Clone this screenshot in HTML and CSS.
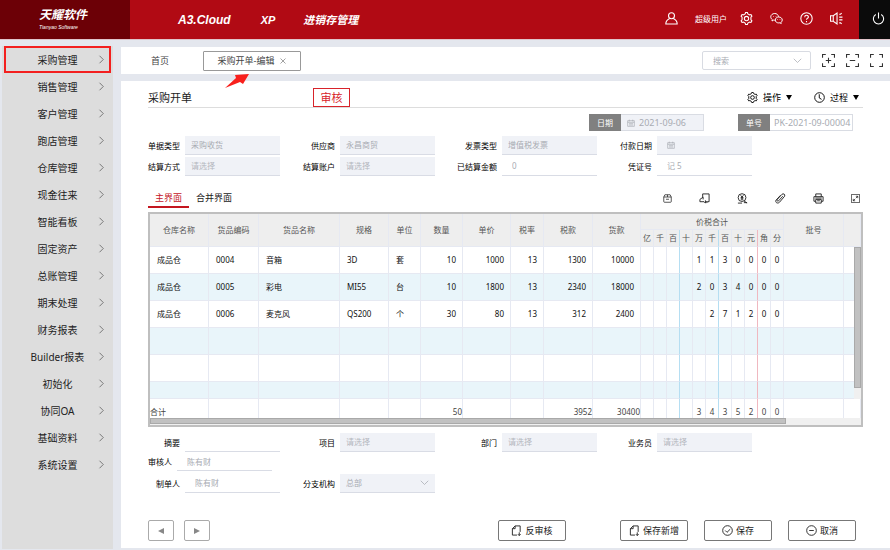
FILE: index.html
```html
<!DOCTYPE html>
<html lang="zh-CN">
<head>
    <meta charset="UTF-8">
    <meta name="viewport" content="width=device-width, initial-scale=1.0">
    <title>采购开单</title>
    <link rel="stylesheet" href="styles.css">
</head>
<body>
    <svg class="sprite" aria-hidden="true">
        <symbol id="i-gear" viewBox="0 0 24 24"><path d="M9.5 3.5 10.3 1h3.4l.8 2.5 3.2 1.8 2.6-.6 1.7 2.9-1.8 2v4.8l1.8 2-1.7 2.9-2.6-.6-3.2 1.8-.8 2.5h-3.4l-.8-2.5-3.2-1.8-2.6.6L2 16.4l1.8-2V9.6L2 7.6l1.700-2.900 2.600.6z"/><circle cx="12" cy="12" r="4"/></symbol>
        <symbol id="i-user" viewBox="0 0 24 24"><circle cx="12" cy="7" r="5.500"/><path d="M8.500 12C4.500 14 1.500 17 1.500 22h21c0-5-3-8-7-10"/></symbol>
        <symbol id="i-chat" viewBox="0 0 26 24"><path d="M17 8.500C16.500 4.500 13.500 2 9.500 2 5 2 1.500 5 1.500 8.700c0 2.200 1.200 4 3 5.300L4 17l3.200-1.800c.8.2 1.500.3 2.300.3"/><path d="M17.500 9c4 0 7 2.600 7 6 0 1.900-1 3.500-2.500 4.600l.5 2.400-2.700-1.400c-.7.2-1.500.3-2.300.3-4 0-7-2.600-7-5.900s3-6 7-6z"/><path d="M7 7v1M12 7v1M15 13.500v1M20 13.500v1"/></symbol>
        <symbol id="i-help" viewBox="0 0 24 24"><circle cx="12" cy="12" r="10.500"/><path d="M8.700 9.500c0-4.500 6.800-4.300 6.800-.4 0 2.600-3.500 2.500-3.500 5.400M12 16.800v2"/></symbol>
        <symbol id="i-sound" viewBox="0 0 24 24"><path d="M1 7h5l7-5v20l-7-5H1zM6 7v10M17 4h2.500l2-2M17 9.500h6M17 14.500h6M17 20h2.500l2 2"/></symbol>
        <symbol id="i-power" viewBox="0 0 24 24"><path d="M7 4.500a9.500 9.500 0 1 0 10 0M12 1v11"/></symbol>
        <symbol id="i-corners" viewBox="0 0 24 24"><path d="M1 7V1h6M17 1h6v6M23 17v6h-6M7 23H1v-6"/></symbol>
        <symbol id="i-zoomin" viewBox="0 0 24 24"><path d="M1 7V1h6M17 1h6v6M23 17v6h-6M7 23H1v-6M7 12h10M12 7v10"/></symbol>
        <symbol id="i-zoomout" viewBox="0 0 24 24"><path d="M1 7V1h6M17 1h6v6M23 17v6h-6M7 23H1v-6M7 12h10"/></symbol>
        <symbol id="i-clock" viewBox="0 0 24 24"><circle cx="12" cy="12" r="10.500"/><path d="M11.500 5v8l5 3"/></symbol>
        <symbol id="i-right" viewBox="0 0 8 12"><path d="m2 1 5 5-5 5"/></symbol>
        <symbol id="i-down" viewBox="0 0 12 8"><path d="m1 1 5 5 5-5"/></symbol>
        <symbol id="i-close" viewBox="0 0 12 12"><path d="m1 1 10 10M11 1 1 11"/></symbol>
        <symbol id="i-date" viewBox="0 0 24 24"><path d="M2 5h20v17H2zM2 10h20M7 2v5M17 2v5M6 14h12M6 18h12"/></symbol>
        <symbol id="i-box" viewBox="0 0 24 24"><path d="M2 8h20v12a2 2 0 0 1-2 2H4a2 2 0 0 1-2-2zM2 8l3-6h14l3 6M8 14h8M12 2v6"/></symbol>
        <symbol id="i-copy" viewBox="0 0 24 24"><path d="M8 2h14v17h-3M8 2v7M9 9l-7 5v5h9M9 9v5M11 19l3 3v-6M14 19h5l-3 3"/></symbol>
        <symbol id="i-money" viewBox="0 0 24 24"><circle cx="11" cy="10" r="8.500"/><path d="m8 5 3 4 3-4M11 9v7M8 10h6M8 13h6M2 22h9M15 17l7 5M15 21h7"/></symbol>
        <symbol id="i-clip" viewBox="0 0 24 24"><path d="M17 7 8 17c-2 2-5 0-3-3L15 3c3-3 8 0 6 4L10 20c-4 4-10 1-8-4L12 5"/></symbol>
        <symbol id="i-print" viewBox="0 0 24 24"><path d="M6 8V2h12v6M6 18H2V8h20v10h-4M6 14h12v8H6zM5 11h14M9 17h6"/></symbol>
        <symbol id="i-expand" viewBox="0 0 24 24"><path d="M1 1h22v22H1zM13 6h5v5M18 6l-5 5M11 18H6v-5M6 18l5-5"/></symbol>
        <symbol id="i-doc" viewBox="0 0 24 24"><path d="M13 22H3V8l6-6h11v13M9 2v6H3M18 16v7M15 20l3 3 3-3"/></symbol>
        <symbol id="i-check" viewBox="0 0 24 24"><circle cx="12" cy="12" r="10.500"/><path d="m7 12 4 4 7-7"/></symbol>
        <symbol id="i-minus" viewBox="0 0 24 24"><circle cx="12" cy="12" r="10.500"/><path d="M7 12h10"/></symbol>
    </svg>

    <header class="header">
        <div class="logo">
            <strong>天耀软件</strong>
            <span>Tianyao Software</span>
        </div>
        <nav class="brand">
            <span class="brand-name">A3.Cloud</span>
            <span class="brand-xp">XP</span>
            <span class="brand-module">进销存管理</span>
        </nav>
        <div class="header-tools">
            <svg class="icon-l"><use href="#i-user"/></svg>
            <span class="user-name">超级用户</span>
            <button aria-label="设置"><svg class="icon-l"><use href="#i-gear"/></svg></button>
            <button aria-label="微信"><svg class="icon-l"><use href="#i-chat"/></svg></button>
            <button aria-label="帮助"><svg class="icon-l"><use href="#i-help"/></svg></button>
            <button aria-label="公告"><svg class="icon-l"><use href="#i-sound"/></svg></button>
        </div>
        <button class="power" aria-label="退出"><svg class="icon-l"><use href="#i-power"/></svg></button>
    </header>

    <div class="layout">
        <nav class="sidebar">
            <a href="#" class="active"><span>采购管理</span><svg><use href="#i-right"/></svg></a>
            <a href="#"><span>销售管理</span><svg><use href="#i-right"/></svg></a>
            <a href="#"><span>客户管理</span><svg><use href="#i-right"/></svg></a>
            <a href="#"><span>跑店管理</span><svg><use href="#i-right"/></svg></a>
            <a href="#"><span>仓库管理</span><svg><use href="#i-right"/></svg></a>
            <a href="#"><span>现金往来</span><svg><use href="#i-right"/></svg></a>
            <a href="#"><span>智能看板</span><svg><use href="#i-right"/></svg></a>
            <a href="#"><span>固定资产</span><svg><use href="#i-right"/></svg></a>
            <a href="#"><span>总账管理</span><svg><use href="#i-right"/></svg></a>
            <a href="#"><span>期末处理</span><svg><use href="#i-right"/></svg></a>
            <a href="#"><span>财务报表</span><svg><use href="#i-right"/></svg></a>
            <a href="#"><span>Builder报表</span><svg><use href="#i-right"/></svg></a>
            <a href="#"><span>初始化</span><svg><use href="#i-right"/></svg></a>
            <a href="#"><span>协同OA</span><svg><use href="#i-right"/></svg></a>
            <a href="#"><span>基础资料</span><svg><use href="#i-right"/></svg></a>
            <a href="#"><span>系统设置</span><svg><use href="#i-right"/></svg></a>
        </nav>

        <main class="main">
            <div class="tabbar">
                <a href="#" class="home">首页</a>
                <a href="#" class="page-tab">采购开单-编辑 <svg class="icon-s"><use href="#i-close"/></svg>
                    <svg class="arrow" viewBox="0 0 24 14"><path d="M0 14 11 4 10 1 24 0 18 10 15 8z"/></svg>
                </a>
                <div class="tabbar-right">
                    <div class="search">
                        <select aria-label="搜索"><option>搜索</option></select>
                        <svg class="chevron"><use href="#i-down"/></svg>
                    </div>
                    <button aria-label="放大"><svg class="icon-l"><use href="#i-zoomin"/></svg></button>
                    <button aria-label="缩小"><svg class="icon-l"><use href="#i-zoomout"/></svg></button>
                    <button aria-label="全屏"><svg class="icon-l"><use href="#i-corners"/></svg></button>
                </div>
            </div>

            <section class="panel">
                <div class="title-row">
                    <h1>采购开单</h1>
                    <button class="audit">审核</button>
                    <div class="title-tools">
                        <button><svg class="icon-m"><use href="#i-gear"/></svg>操作<i class="caret"></i></button>
                        <button><svg class="icon-m"><use href="#i-clock"/></svg>过程<i class="caret"></i></button>
                    </div>
                </div>

                <div class="doc-row">
                    <div class="doc-item doc-date">
                        <label for="date">日期</label>
                        <div class="doc-input"><svg class="icon-s"><use href="#i-date"/></svg><input id="date" value="2021-09-06"></div>
                    </div>
                    <div class="doc-item">
                        <label for="no">单号</label>
                        <div class="doc-input"><input id="no" value="PK-2021-09-00004"></div>
                    </div>
                </div>

                <form class="form">
                    <div class="field"><label for="f1">单据类型</label><div class="box"><input id="f1" value="采购收货"></div></div>
                    <div class="field"><label for="f2">供应商</label><div class="box"><input id="f2" value="永昌商贸"></div></div>
                    <div class="field"><label for="f3">发票类型</label><div class="box"><input id="f3" value="增值税发票"></div></div>
                    <div class="field"><label for="f4">付款日期</label><div class="box indent"><svg class="icon-s"><use href="#i-date"/></svg><input id="f4"></div></div>
                    <div class="field first"><label for="f5">结算方式</label><div class="box"><input id="f5" placeholder="请选择"></div></div>
                    <div class="field"><label for="f6">结算账户</label><div class="box"><input id="f6" placeholder="请选择"></div></div>
                    <div class="field"><label for="f7">已结算金额</label><div class="box line indent"><input id="f7" value="0"></div></div>
                    <div class="field"><label for="f8">凭证号</label><div class="box line indent"><input id="f8" value="记 5"></div></div>
                </form>

                <div class="view-row">
                    <a href="#" class="current">主界面</a>
                    <a href="#">合并界面</a>
                    <div class="view-tools">
                        <button aria-label="归档"><svg class="icon-s"><use href="#i-box"/></svg></button>
                        <button aria-label="引用"><svg class="icon-m"><use href="#i-copy"/></svg></button>
                        <button aria-label="付款"><svg class="icon-m"><use href="#i-money"/></svg></button>
                        <button aria-label="附件"><svg class="icon-m"><use href="#i-clip"/></svg></button>
                        <button aria-label="打印"><svg class="icon-m"><use href="#i-print"/></svg></button>
                        <button aria-label="展开"><svg class="icon-s"><use href="#i-expand"/></svg></button>
                    </div>
                </div>

                <div class="grid">
                    <table>
                        <colgroup>
                            <col class="w59"><col class="w50"><col class="w81"><col class="w49"><col class="w32">
                            <col class="w42"><col class="w48"><col class="w33"><col class="w49"><col class="w48">
                            <col class="w13" span="11"><col class="w60"><col>
                        </colgroup>
                        <thead>
                            <tr class="head-top">
                                <th rowspan="2">仓库名称</th><th rowspan="2">货品编码</th><th rowspan="2">货品名称</th><th rowspan="2">规格</th><th rowspan="2">单位</th>
                                <th rowspan="2">数量</th><th rowspan="2">单价</th><th rowspan="2">税率</th><th rowspan="2">税款</th><th rowspan="2">货款</th>
                                <th colspan="11">价税合计</th><th rowspan="2">批号</th><th rowspan="2"></th>
                            </tr>
                            <tr class="head-digits">
                                <th>亿</th><th>千</th><th>百</th><th>十</th><th>万</th><th>千</th><th>百</th><th>十</th><th>元</th><th>角</th><th>分</th>
                            </tr>
                        </thead>
                        <tbody>
                            <tr>
                                <td>成品仓</td><td>0004</td><td>音箱</td><td>3D</td><td>套</td><td>10</td><td>1000</td><td>13</td><td>1300</td><td>10000</td>
                                <td></td><td></td><td></td><td></td><td>1</td><td>1</td><td>3</td><td>0</td><td>0</td><td>0</td><td>0</td><td></td><td></td>
                            </tr>
                            <tr>
                                <td>成品仓</td><td>0005</td><td>彩电</td><td>MI55</td><td>台</td><td>10</td><td>1800</td><td>13</td><td>2340</td><td>18000</td>
                                <td></td><td></td><td></td><td></td><td>2</td><td>0</td><td>3</td><td>4</td><td>0</td><td>0</td><td>0</td><td></td><td></td>
                            </tr>
                            <tr>
                                <td>成品仓</td><td>0006</td><td>麦克风</td><td>QS200</td><td>个</td><td>30</td><td>80</td><td>13</td><td>312</td><td>2400</td>
                                <td></td><td></td><td></td><td></td><td></td><td>2</td><td>7</td><td>1</td><td>2</td><td>0</td><td>0</td><td></td><td></td>
                            </tr>
                            <tr>
                                <td></td><td></td><td></td><td></td><td></td><td></td><td></td><td></td><td></td><td></td>
                                <td></td><td></td><td></td><td></td><td></td><td></td><td></td><td></td><td></td><td></td><td></td><td></td><td></td>
                            </tr>
                            <tr>
                                <td></td><td></td><td></td><td></td><td></td><td></td><td></td><td></td><td></td><td></td>
                                <td></td><td></td><td></td><td></td><td></td><td></td><td></td><td></td><td></td><td></td><td></td><td></td><td></td>
                            </tr>
                            <tr class="cut">
                                <td></td><td></td><td></td><td></td><td></td><td></td><td></td><td></td><td></td><td></td>
                                <td></td><td></td><td></td><td></td><td></td><td></td><td></td><td></td><td></td><td></td><td></td><td></td><td></td>
                            </tr>
                        </tbody>
                        <tfoot>
                            <tr>
                                <td>合计</td><td></td><td></td><td></td><td></td><td>50</td><td></td><td></td><td>3952</td><td>30400</td>
                                <td></td><td></td><td></td><td></td><td>3</td><td>4</td><td>3</td><td>5</td><td>2</td><td>0</td><td>0</td><td></td><td></td>
                            </tr>
                        </tfoot>
                    </table>
                    <div class="scroll-y"><div class="thumb"></div></div>
                    <div class="scroll-x"><div class="thumb"></div></div>
                </div>

                <form class="form form-bottom">
                    <div class="field"><label for="g1">摘要</label><div class="box line"><input id="g1"></div></div>
                    <div class="field"><label for="g2">项目</label><div class="box"><input id="g2" placeholder="请选择"></div></div>
                    <div class="field"><label for="g3">部门</label><div class="box"><input id="g3" placeholder="请选择"></div></div>
                    <div class="field"><label for="g4">业务员</label><div class="box"><input id="g4" placeholder="请选择"></div></div>
                    <div class="field auditor"><label for="g5">审核人</label><div class="box line indent"><input id="g5" value="陈有财"></div></div>
                    <div class="field first"><label for="g6">制单人</label><div class="box line indent"><input id="g6" value="陈有财"></div></div>
                    <div class="field"><label for="g7">分支机构</label><div class="box"><select id="g7"><option>总部</option></select><svg class="chevron"><use href="#i-down"/></svg></div></div>
                </form>

                <div class="actions">
                    <button class="step" aria-label="上一张"><i class="tri-left"></i></button>
                    <button class="step" aria-label="下一张"><i class="tri-right"></i></button>
                    <button class="btn unaudit"><svg class="icon-m"><use href="#i-doc"/></svg>反审核</button>
                    <button class="btn save-new"><svg class="icon-m"><use href="#i-doc"/></svg>保存新增</button>
                    <button class="btn"><svg class="icon-m"><use href="#i-check"/></svg>保存</button>
                    <button class="btn"><svg class="icon-m"><use href="#i-minus"/></svg>取消</button>
                </div>
            </section>
        </main>
    </div>
</body>
</html>
```
FILE: styles.css
```css
* {
    box-sizing: border-box;
}
body {
    margin: 0;
    min-height: 100vh;
    display: flex;
    flex-direction: column;
    background: #e4e7ee;
    color: #222;
    font-family: "Noto Sans", "Noto Sans CJK SC", sans-serif;
    font-size: 8px;
    line-height: 12px;
}
a {
    color: inherit;
    text-decoration: none;
}
button, input, select {
    font: inherit;
    color: inherit;
    margin: 0;
    padding: 0;
    border: none;
    background: none;
    outline: none;
}
button {
    display: flex;
    align-items: center;
    justify-content: center;
    cursor: pointer;
}
svg {
    display: block;
    flex: none;
    fill: none;
    stroke: currentColor;
    stroke-width: 2;
}
.sprite {
    position: absolute;
    width: 0;
    height: 0;
}
.icon-s {
    width: 9px;
    height: 9px;
}
.icon-m {
    width: 11px;
    height: 11px;
}
.icon-l {
    width: 13px;
    height: 13px;
}
.chevron {
    width: 9px;
    height: 6px;
    stroke-width: 1;
    color: #a8abb2;
}

/* header */
.header {
    display: flex;
    height: 40px;
    background: #b10a14;
    border-bottom: 1px solid #e0c4ca;
    color: #fff;
}
.logo {
    width: 130px;
    padding: 7px 0 0 39px;
    background: #6c0006;
    font-family: "Liberation Sans", "Noto Sans CJK SC", sans-serif;
    font-style: italic;
}
.logo strong {
    display: block;
    font-size: 12px;
    line-height: 16px;
}
.logo span {
    display: block;
    margin-top: 1px;
    font-size: 5px;
    line-height: 6px;
}
.brand {
    flex: 1;
    display: flex;
    align-items: center;
    padding-left: 48px;
    font-family: "Liberation Sans", "Noto Sans CJK SC", sans-serif;
    font-weight: bold;
    font-style: italic;
    font-size: 11px;
}
.brand-name {
    font-size: 12px;
}
.brand-xp {
    margin: 0 28px 0 30px;
}
.header-tools {
    display: flex;
    align-items: center;
    gap: 17px;
    padding: 0 16px 2px 0;
}
.user-name {
    margin-right: -4px;
}
.power {
    width: 31px;
    padding: 0 0 2px 7px;
    background: #0b0b0b;
    color: #fff;
}

/* sidebar */
.layout {
    flex: 1;
    display: flex;
    gap: 8px;
    padding: 6px 0 1px 2px;
}
.sidebar {
    width: 111px;
    padding: 0 2px;
    background: #ddd;
    font-size: 10px;
}
.sidebar a {
    display: grid;
    grid-template-columns: 12px 1fr 12px;
    align-items: center;
    height: 27px;
    padding: 0 3px;
    border: 2px solid transparent;
    text-align: center;
}
.sidebar a.active {
    border-color: #f32020;
}
.sidebar span {
    grid-column: 2;
}
.sidebar svg {
    width: 6px;
    height: 9px;
    margin-left: 4px;
    stroke-width: 1;
    color: #555;
}

/* page tabs */
.main {
    flex: 1;
    display: flex;
    flex-direction: column;
    gap: 7px;
    min-width: 0;
    padding: 1px 0;
}
.tabbar {
    display: flex;
    align-items: center;
    height: 27px;
    padding: 0 7px 0 30px;
    background: #fff;
    color: #444;
    font-size: 9px;
}
.page-tab {
    position: relative;
    display: flex;
    align-items: center;
    justify-content: center;
    gap: 6px;
    width: 98px;
    height: 20px;
    margin-left: 34px;
    border: 1px solid #999;
    border-radius: 1px;
}
.page-tab .icon-s {
    width: 6px;
    height: 6px;
    stroke-width: 1;
}
.arrow {
    position: absolute;
    left: 21px;
    top: 22px;
    width: 24px;
    height: 14px;
    fill: #f8201c;
    stroke: none;
}
.tabbar-right {
    flex: 1;
    display: flex;
    justify-content: flex-end;
    align-items: center;
    gap: 11px;
}
.tabbar-right button {
    color: #333;
}
.search {
    display: flex;
    align-items: center;
    width: 109px;
    height: 19px;
    padding: 0 8px 0 10px;
    border: 1px solid #d8dbe2;
    border-radius: 2px;
    color: #a8abb2;
    font-size: 8px;
}
select {
    flex: 1;
    min-width: 0;
    appearance: none;
}

/* document */
.panel {
    flex: 1;
    display: flex;
    flex-direction: column;
    padding: 7px 27px;
    background: #fff;
}
.title-row {
    display: flex;
    align-items: center;
    height: 20px;
    border-bottom: 1px solid #ddd;
}
h1 {
    width: 165px;
    margin: 0;
    font-size: 11px;
    font-weight: normal;
}
.audit {
    width: 37px;
    height: 19px;
    border: 1px solid #d8232a;
    color: #d8232a;
    font-size: 11px;
}
.title-tools {
    flex: 1;
    display: flex;
    justify-content: flex-end;
    gap: 22px;
    padding-right: 4px;
    color: #000;
    font-size: 9px;
}
.title-tools button {
    gap: 5px;
}
.caret {
    border: 3px solid transparent;
    border-top: 5px solid #000;
    border-bottom: none;
}
.doc-row {
    display: flex;
    justify-content: flex-end;
    gap: 34px;
    margin-top: 6px;
    padding-right: 10px;
}
.doc-item {
    display: flex;
    width: 115px;
    height: 17px;
}
.doc-item label {
    width: 32px;
    background: #808080;
    color: #fff;
    text-align: center;
    line-height: 17px;
}
.doc-input {
    flex: 1;
    display: flex;
    align-items: center;
    gap: 4px;
    min-width: 0;
    padding-left: 4px;
    border: 1px solid #d9dce3;
    border-left: none;
    color: #a8abb2;
}
.doc-input input {
    font-size: 9px;
}
.doc-date .doc-input {
    padding-left: 6px;
    background: #f0f2f7;
}
input {
    flex: 1;
    width: 100%;
    min-width: 0;
}
input::placeholder {
    color: #b4b7be;
    opacity: 1;
}

/* label + field grid */
.form {
    display: grid;
    grid-template-columns: 132fr 155fr 162fr 155fr 111fr;
    row-gap: 2px;
    margin-top: 5px;
}
.field {
    display: flex;
    align-items: center;
    justify-content: flex-end;
    gap: 5px;
    height: 19px;
}
.field:nth-child(4) {
    grid-column: 4;
}
.field.first {
    grid-column: 1;
}
.field label {
    color: #000;
}
.box {
    display: flex;
    align-items: center;
    width: 95px;
    height: 19px;
    padding: 0 6px;
    background: #f0f2f7;
    border-bottom: 1px solid #d9dce5;
    color: #a8abb2;
}
.box.line {
    background: none;
}
.box.indent {
    padding-left: 10px;
}
.box .icon-s, .doc-input .icon-s {
    width: 8px;
    height: 8px;
}

/* view tabs */
.view-row {
    display: flex;
    height: 20px;
    margin: 12px 0 4px;
    font-size: 9px;
}
.view-row a {
    padding: 4px 7px 2px;
}
.view-row .current {
    border-bottom: 2px solid #c4161f;
    color: #c4161f;
}
.view-tools {
    flex: 1;
    display: flex;
    justify-content: flex-end;
    align-items: center;
    gap: 27px;
    padding-right: 3px;
    color: #222;
}

/* table */
.grid {
    position: relative;
    border: 2px solid #bfbfbf;
}
table {
    width: 100%;
    table-layout: fixed;
    border-collapse: separate;
    border-spacing: 0;
}
.w13 { width: 13px; }
.w32 { width: 32px; }
.w33 { width: 33px; }
.w42 { width: 42px; }
.w48 { width: 48px; }
.w49 { width: 49px; }
.w50 { width: 50px; }
.w59 { width: 59px; }
.w60 { width: 60px; }
.w81 { width: 81px; }
th, td {
    padding: 0;
    border-right: 1px solid #e6e9f2;
    border-bottom: 1px solid #e6e9f2;
}
th {
    background: #eee;
    color: #555;
    font-weight: normal;
}
.head-top {
    height: 16px;
}
.head-digits {
    height: 17px;
}
td {
    height: 27px;
    color: #111;
}
td:nth-child(-n+5) {
    padding-left: 7px;
}
td:nth-child(n+6):nth-child(-n+10) {
    padding-right: 6px;
    text-align: right;
}
td:nth-child(n+11) {
    text-align: center;
}
tbody tr:nth-child(even) td {
    background: #e9f5fa;
}
.cut td {
    height: 17px;
}
tfoot td {
    height: 19px;
    border-bottom: none;
    color: #444;
    vertical-align: bottom;
}
tfoot td:nth-child(-n+5) {
    padding-left: 0;
}
tfoot td:nth-child(n+6):nth-child(-n+10) {
    padding-right: 0;
}
.head-digits th:nth-child(3), .head-digits th:nth-child(6),
td:nth-child(13), td:nth-child(16) {
    border-right-color: #b5def2;
}
.head-digits th:nth-child(9), td:nth-child(19) {
    border-right-color: #f0b8c0;
}
.scroll-y {
    position: absolute;
    top: 33px;
    right: 0;
    bottom: 26px;
    width: 7px;
    background: #f0f0f0;
}
.scroll-y .thumb {
    height: 93%;
}
.scroll-x {
    height: 7px;
    background: #f0f0f0;
}
.scroll-x .thumb {
    width: 89.4%;
    height: 6px;
}
.thumb {
    background: #c1c1c1;
    border: 1px solid #a9a9a9;
}

/* bottom form */
.form-bottom {
    row-gap: 1px;
    margin-top: 6px;
}
.field.auditor {
    grid-column: 1;
    justify-content: flex-start;
    height: 18px;
}
.auditor .box {
    height: 18px;
}
.field.auditor ~ .field {
    margin-top: 2px;
}

/* buttons */
.actions {
    display: flex;
    gap: 16px;
    margin-top: auto;
    padding-right: 7px;
    font-size: 9px;
}
.actions button {
    height: 21px;
    border: 1px solid #777;
    border-radius: 2px;
}
.actions .step {
    width: 26px;
    margin-right: -6px;
    border-color: #aaa;
}
.actions .btn {
    width: 68px;
    gap: 3px;
}
.actions .unaudit {
    margin-left: auto;
}
.actions .save-new {
    margin-left: 38px;
}
.tri-left, .tri-right {
    border: 3px solid transparent;
}
.tri-left {
    border-right: 6px solid #888;
    border-left: none;
}
.tri-right {
    border-left: 6px solid #888;
    border-right: none;
}
```
